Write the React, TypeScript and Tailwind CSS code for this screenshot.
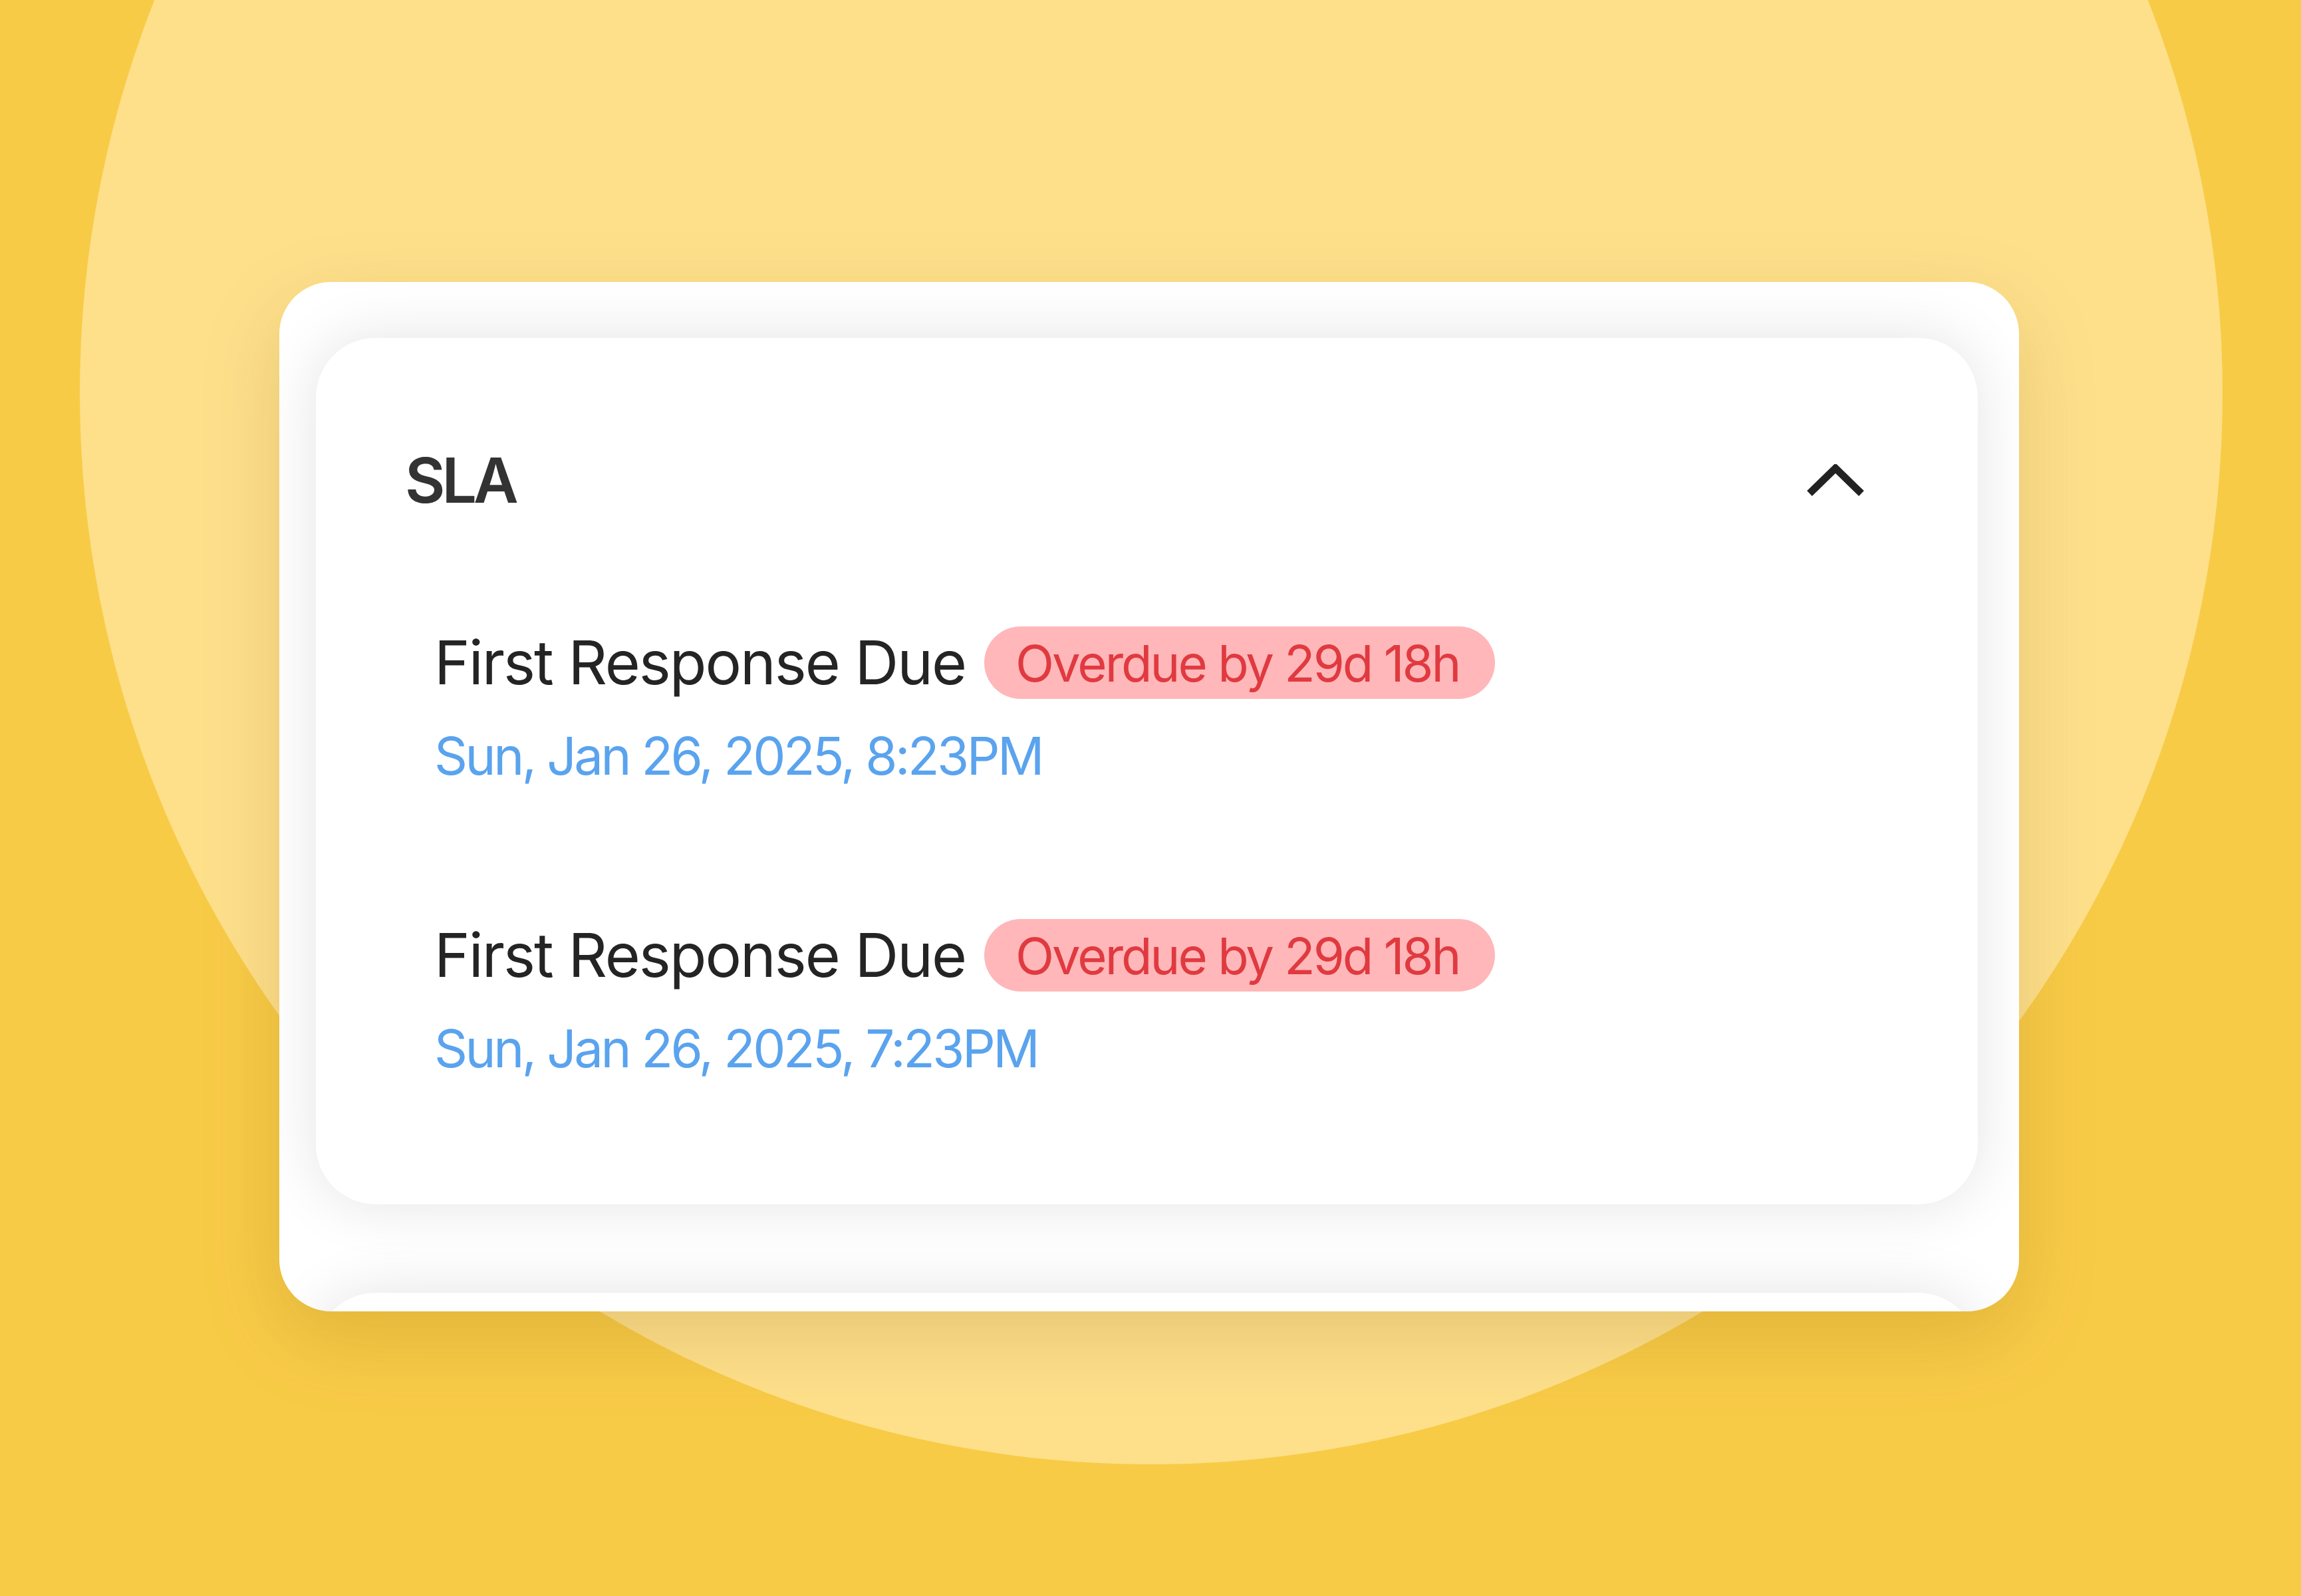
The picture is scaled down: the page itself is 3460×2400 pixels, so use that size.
import React from 'react';

const font = { fontFamily: 'Inter, "Noto Sans", sans-serif' };

const slaItems = [
  { title: 'First Response Due', overdue: 'Overdue by 29d 18h', due: 'Sun, Jan 26, 2025, 8:23PM' },
  { title: 'First Response Due', overdue: 'Overdue by 29d 18h', due: 'Sun, Jan 26, 2025, 7:23PM' },
];

const ChevronUp = () => (
  <svg width="90" height="50" viewBox="0 0 90 50" fill="none">
    <polyline
      points="6,44 45,6 84,44"
      stroke="#222222"
      strokeWidth="11"
      strokeLinecap="butt"
      strokeLinejoin="miter"
    />
  </svg>
);

const SlaRow = (props: any) => {
  return (
    <div className="ml-[44px] flex flex-col">
      <div className="flex items-center gap-[28px]">
        <span className="text-[91px] leading-none tracking-[-2px] text-[#242424]">{props.title}</span>
        <span className="flex h-[109px] items-center rounded-full bg-[#ffb7b9] pl-[47px] pr-[53px] text-[76px] leading-none tracking-[-3px] text-[#e03a40]">
          {props.overdue}
        </span>
      </div>
      <div className="mt-[47px] text-[78px] leading-none tracking-[-3.5px] text-[#5aa3ee]">
        {props.due}
      </div>
    </div>
  );
};

const App = () => {
  return (
    <div
      className="relative h-[2400px] w-[3460px] overflow-hidden bg-[#f8cb47] pl-[420px] pt-[424px]"
      style={font}
    >
      {/* big pale circle behind the card */}
      <div className="absolute left-[120px] top-[-1020px] h-[3222px] w-[3222px] rounded-full bg-[#fee08b]" />

      <div className="relative z-10 flex h-[1548px] w-[2616px] flex-col gap-[133px] overflow-hidden rounded-[78px] bg-white pl-[55px] pr-[62px] pt-[84px] shadow-[0_40px_120px_rgba(120,80,0,0.18)]">
        <div className="flex flex-col rounded-[90px] bg-white pb-[195px] pl-[134px] pr-[169px] pt-[167px] shadow-[0_0_90px_rgba(0,0,0,0.11)]">
          <div className="flex h-[95px] items-center justify-between">
            <span className="text-[93px] font-semibold leading-none tracking-[-5px] text-[#333333]">SLA</span>
            <ChevronUp />
          </div>
          <div className="mt-[172px] flex flex-col gap-[206px]">
            {slaItems.map((item, i) => (
              <SlaRow key={i} title={item.title} overdue={item.overdue} due={item.due} />
            ))}
          </div>
        </div>
        <div className="h-[600px] shrink-0 rounded-[90px] bg-white shadow-[0_0_90px_rgba(0,0,0,0.11)]" />
      </div>
    </div>
  );
};

export default App;
